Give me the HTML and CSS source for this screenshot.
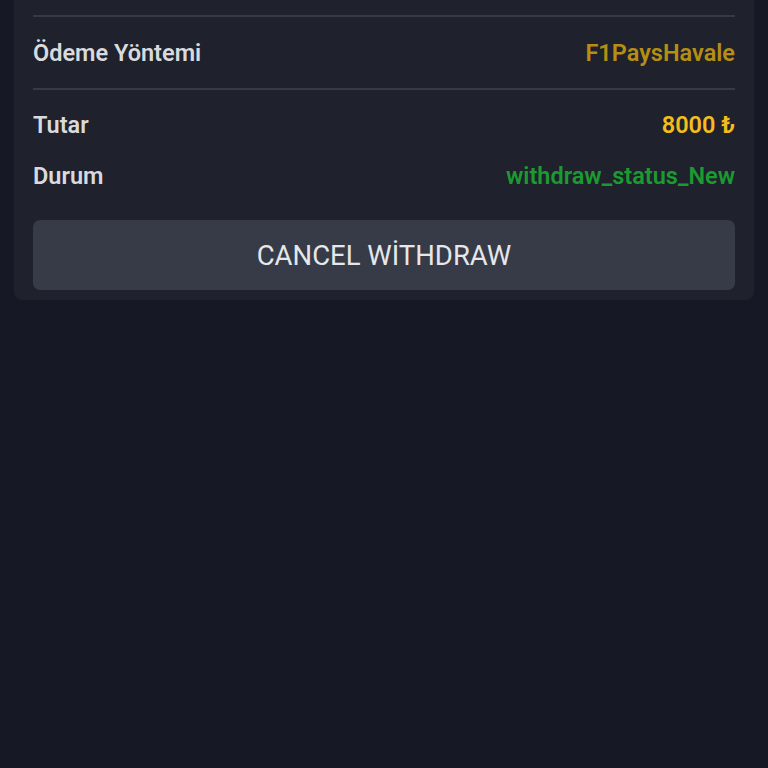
FILE: index.html
```html
<!DOCTYPE html>
<html lang="tr">

<head>
    <meta charset="UTF-8">
    <title>Withdraw</title>
    <link rel="stylesheet" href="styles.css">
</head>

<body>
    <section class="kort">
        <div class="raekke metode">
            <span class="label">Ödeme Yöntemi</span>
            <span class="vaerdi guld">F1PaysHavale</span>
        </div>
        <div class="detaljer">
            <div class="raekke">
                <span class="label">Tutar</span>
                <span class="vaerdi gul">8000 ₺</span>
            </div>
            <div class="raekke">
                <span class="label">Durum</span>
                <span class="vaerdi groen">withdraw_status_New</span>
            </div>
        </div>
        <button class="annuller">CANCEL WİTHDRAW</button>
    </section>
</body></html>
```

FILE: styles.css
```css
body {
    margin: 0;
    background-color: #161925;
    font-family: Roboto, "Liberation Sans", sans-serif;
    height: 768px;
}

.kort {
    margin: 0 14px;
    padding: 15px 19px 10px;
    background-color: #1f212c;
    border-radius: 0 0 8px 8px;
}

.raekke {
    display: flex;
    justify-content: space-between;
    align-items: center;
    height: 51px;
}

.metode {
    height: 71px;
    border-top: 2px solid #363946;
    border-bottom: 2px solid #363946;
}

.detaljer {
    padding-top: 9px;
}

.label {
    color: #d9dade;
    font-size: 23.5px;
    font-weight: 600;
}

.vaerdi {
    font-size: 23.5px;
    font-weight: 600;
}

.guld {
    color: #b58e14;
}

.gul {
    color: #f2bd1d;
}

.groen {
    color: #1b9a31;
}

.annuller {
    display: block;
    width: 100%;
    height: 70px;
    margin-top: 19px;
    border: none;
    border-radius: 7px;
    background-color: #363b47;
    color: #e6e7ea;
    font-family: Roboto, "Liberation Sans", sans-serif;
    font-size: 27.5px;
    font-weight: 400;
}
```
